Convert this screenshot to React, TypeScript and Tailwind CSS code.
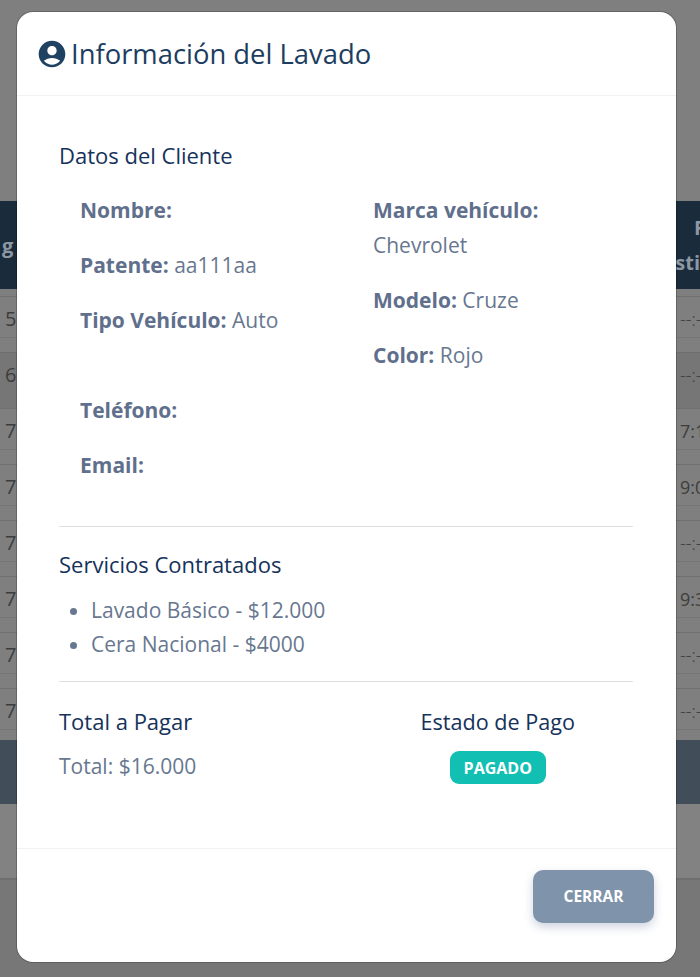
// App.tsx - Wash info modal on top of the dimmed schedule table.
const font = { fontFamily: '"Open Sans", "Noto Sans", sans-serif' };

const rows = [
  { start: "5", end: "--:-" },
  { start: "6", end: "--:-", dark: true },
  { start: "7", end: "7:1" },
  { start: "7", end: "9:0" },
  { start: "7", end: "--:-" },
  { start: "7", end: "9:3" },
  { start: "7", end: "--:-" },
  { start: "7", end: "--:-", last: true },
];

function BackgroundTable() {
  return (
    <div className="flex h-full w-full flex-col bg-[#7f7f7f] text-[#3d3d3d]">
      <div className="h-[201px] shrink-0" />
      <div className="flex h-[88px] shrink-0 items-center justify-between bg-[#1a2b3c] pl-[2px] text-[20px] leading-[35px] font-bold text-[#8d98a3]">
        <span>g</span>
        <span className="flex flex-col items-end">
          <span className="-mr-[5px]">F</span>
          <span>sti</span>
        </span>
      </div>
      <div className="h-[8px] shrink-0 border-b border-[#6f6f6f]" />
      {rows.map((row, i) => (
        <div
          key={i}
          className={`shrink-0 ${row.last ? "h-[51px]" : "h-[56px] border-b border-[#6f6f6f]"} ${row.dark ? "bg-[#767676]" : ""}`}
        >
          <div className="flex h-[41px] items-center justify-between border-b border-[#757575] pt-[4px] pl-[5px]">
            <span className="text-[20px] leading-none">{row.start}</span>
            <span className={`w-[20px] whitespace-nowrap text-[18px] ${row.end.startsWith("-") ? "font-light" : ""}`}>
              {row.end}
            </span>
          </div>
        </div>
      ))}
      <div className="h-[64px] shrink-0 bg-[#414d59]" />
      <div className="h-[76px] shrink-0 border-b-2 border-[#6f6f6f] bg-[#828282]" />
      <div className="flex-1 bg-[#777777]" />
    </div>
  );
}

function Field({ label, value }: { label: string; value?: string }) {
  return (
    <p className="mb-[20px] text-[21px] leading-[35px] text-[#67778f]">
      <span className="font-bold text-[#5f6f8c]">{label}</span>
      {value ? ` ${value}` : ""}
    </p>
  );
}

export default function App() {
  return (
    <div className="relative h-[977px] w-[700px] overflow-hidden" style={font}>
      <BackgroundTable />

      <div className="absolute top-[12px] left-[17px] flex h-[950px] w-[659px] flex-col rounded-[16px] bg-white shadow-[0_0_0_1px_rgba(0,0,0,0.2)]">
        <header className="flex h-[84px] shrink-0 items-center border-b border-[#f2f2f2] pl-[19px]">
          <svg viewBox="0 0 24 24" className="h-[32px] w-[32px] fill-[#1f4263]" aria-hidden="true">
            <path d="M12 2C6.48 2 2 6.48 2 12s4.48 10 10 10 10-4.48 10-10S17.52 2 12 2zm0 4c1.93 0 3.5 1.57 3.5 3.5S13.93 13 12 13s-3.5-1.57-3.5-3.5S10.07 6 12 6zm0 14c-2.03 0-4.43-.82-6.14-2.88C7.55 15.8 9.68 15 12 15s4.45.8 6.14 2.12C16.43 19.18 14.03 20 12 20z" />
          </svg>
          <h1 className="ml-[3px] text-[27.4px] leading-none font-medium text-[#1c3d60]">Información del Lavado</h1>
        </header>

        <div className="flex-1 pt-[42px] pr-[43px] pl-[42px]">
          <h2 className="text-[22px] leading-[35px] font-medium text-[#15325a]">Datos del Cliente</h2>
          <div className="mt-[20px] grid grid-cols-[293px_1fr] pl-[21px]">
            <div>
              <Field label="Nombre:" />
              <Field label="Patente:" value="aa111aa" />
              <Field label="Tipo Vehículo:" value="Auto" />
              <div className="h-[35px]" />
              <Field label="Teléfono:" />
              <Field label="Email:" />
            </div>
            <div>
              <p className="mb-[20px] text-[21px] leading-[35px] text-[#67778f]">
                <span className="font-bold text-[#5f6f8c]">Marca vehículo:</span>
                <br />
                Chevrolet
              </p>
              <Field label="Modelo:" value="Cruze" />
              <Field label="Color:" value="Rojo" />
            </div>
          </div>

          <div className="mt-[23px] border-t border-[#dedede]" />

          <h2 className="mt-[20px] text-[22px] leading-[35px] font-medium text-[#15325a]">Servicios Contratados</h2>
          <ul className="mt-[11px] list-disc pl-[32px] text-[21px] leading-[34px] text-[#67778f]">
            <li>Lavado Básico - $12.000</li>
            <li>Cera Nacional - $4000</li>
          </ul>

          <div className="mt-[20px] border-t border-[#dedede]" />

          <div className="mt-[22px] flex justify-between">
            <div>
              <h2 className="text-[22px] leading-[35px] font-medium text-[#15325a]">Total a Pagar</h2>
              <p className="mt-[10px] text-[21px] leading-[35px] text-[#67778f]">Total: $16.000</p>
            </div>
            <div className="mr-[58px] flex flex-col items-center">
              <h2 className="text-[21.6px] leading-[35px] font-medium text-[#15325a]">Estado de Pago</h2>
              <span className="mt-[12px] flex h-[33px] w-[96px] items-center justify-center rounded-[9px] bg-[#11bfb3] text-[16px] font-bold text-white">
                PAGADO
              </span>
            </div>
          </div>
        </div>

        <footer className="flex h-[114px] shrink-0 justify-end border-t border-[#f2f2f2] pt-[21px] pr-[22px]">
          <button className="flex h-[53px] w-[121px] items-center justify-center rounded-[10px] bg-[#7f94ab] text-[15.5px] font-bold text-white shadow-[0_4px_10px_rgba(90,110,150,0.3)]">
            CERRAR
          </button>
        </footer>
      </div>
    </div>
  );
}
